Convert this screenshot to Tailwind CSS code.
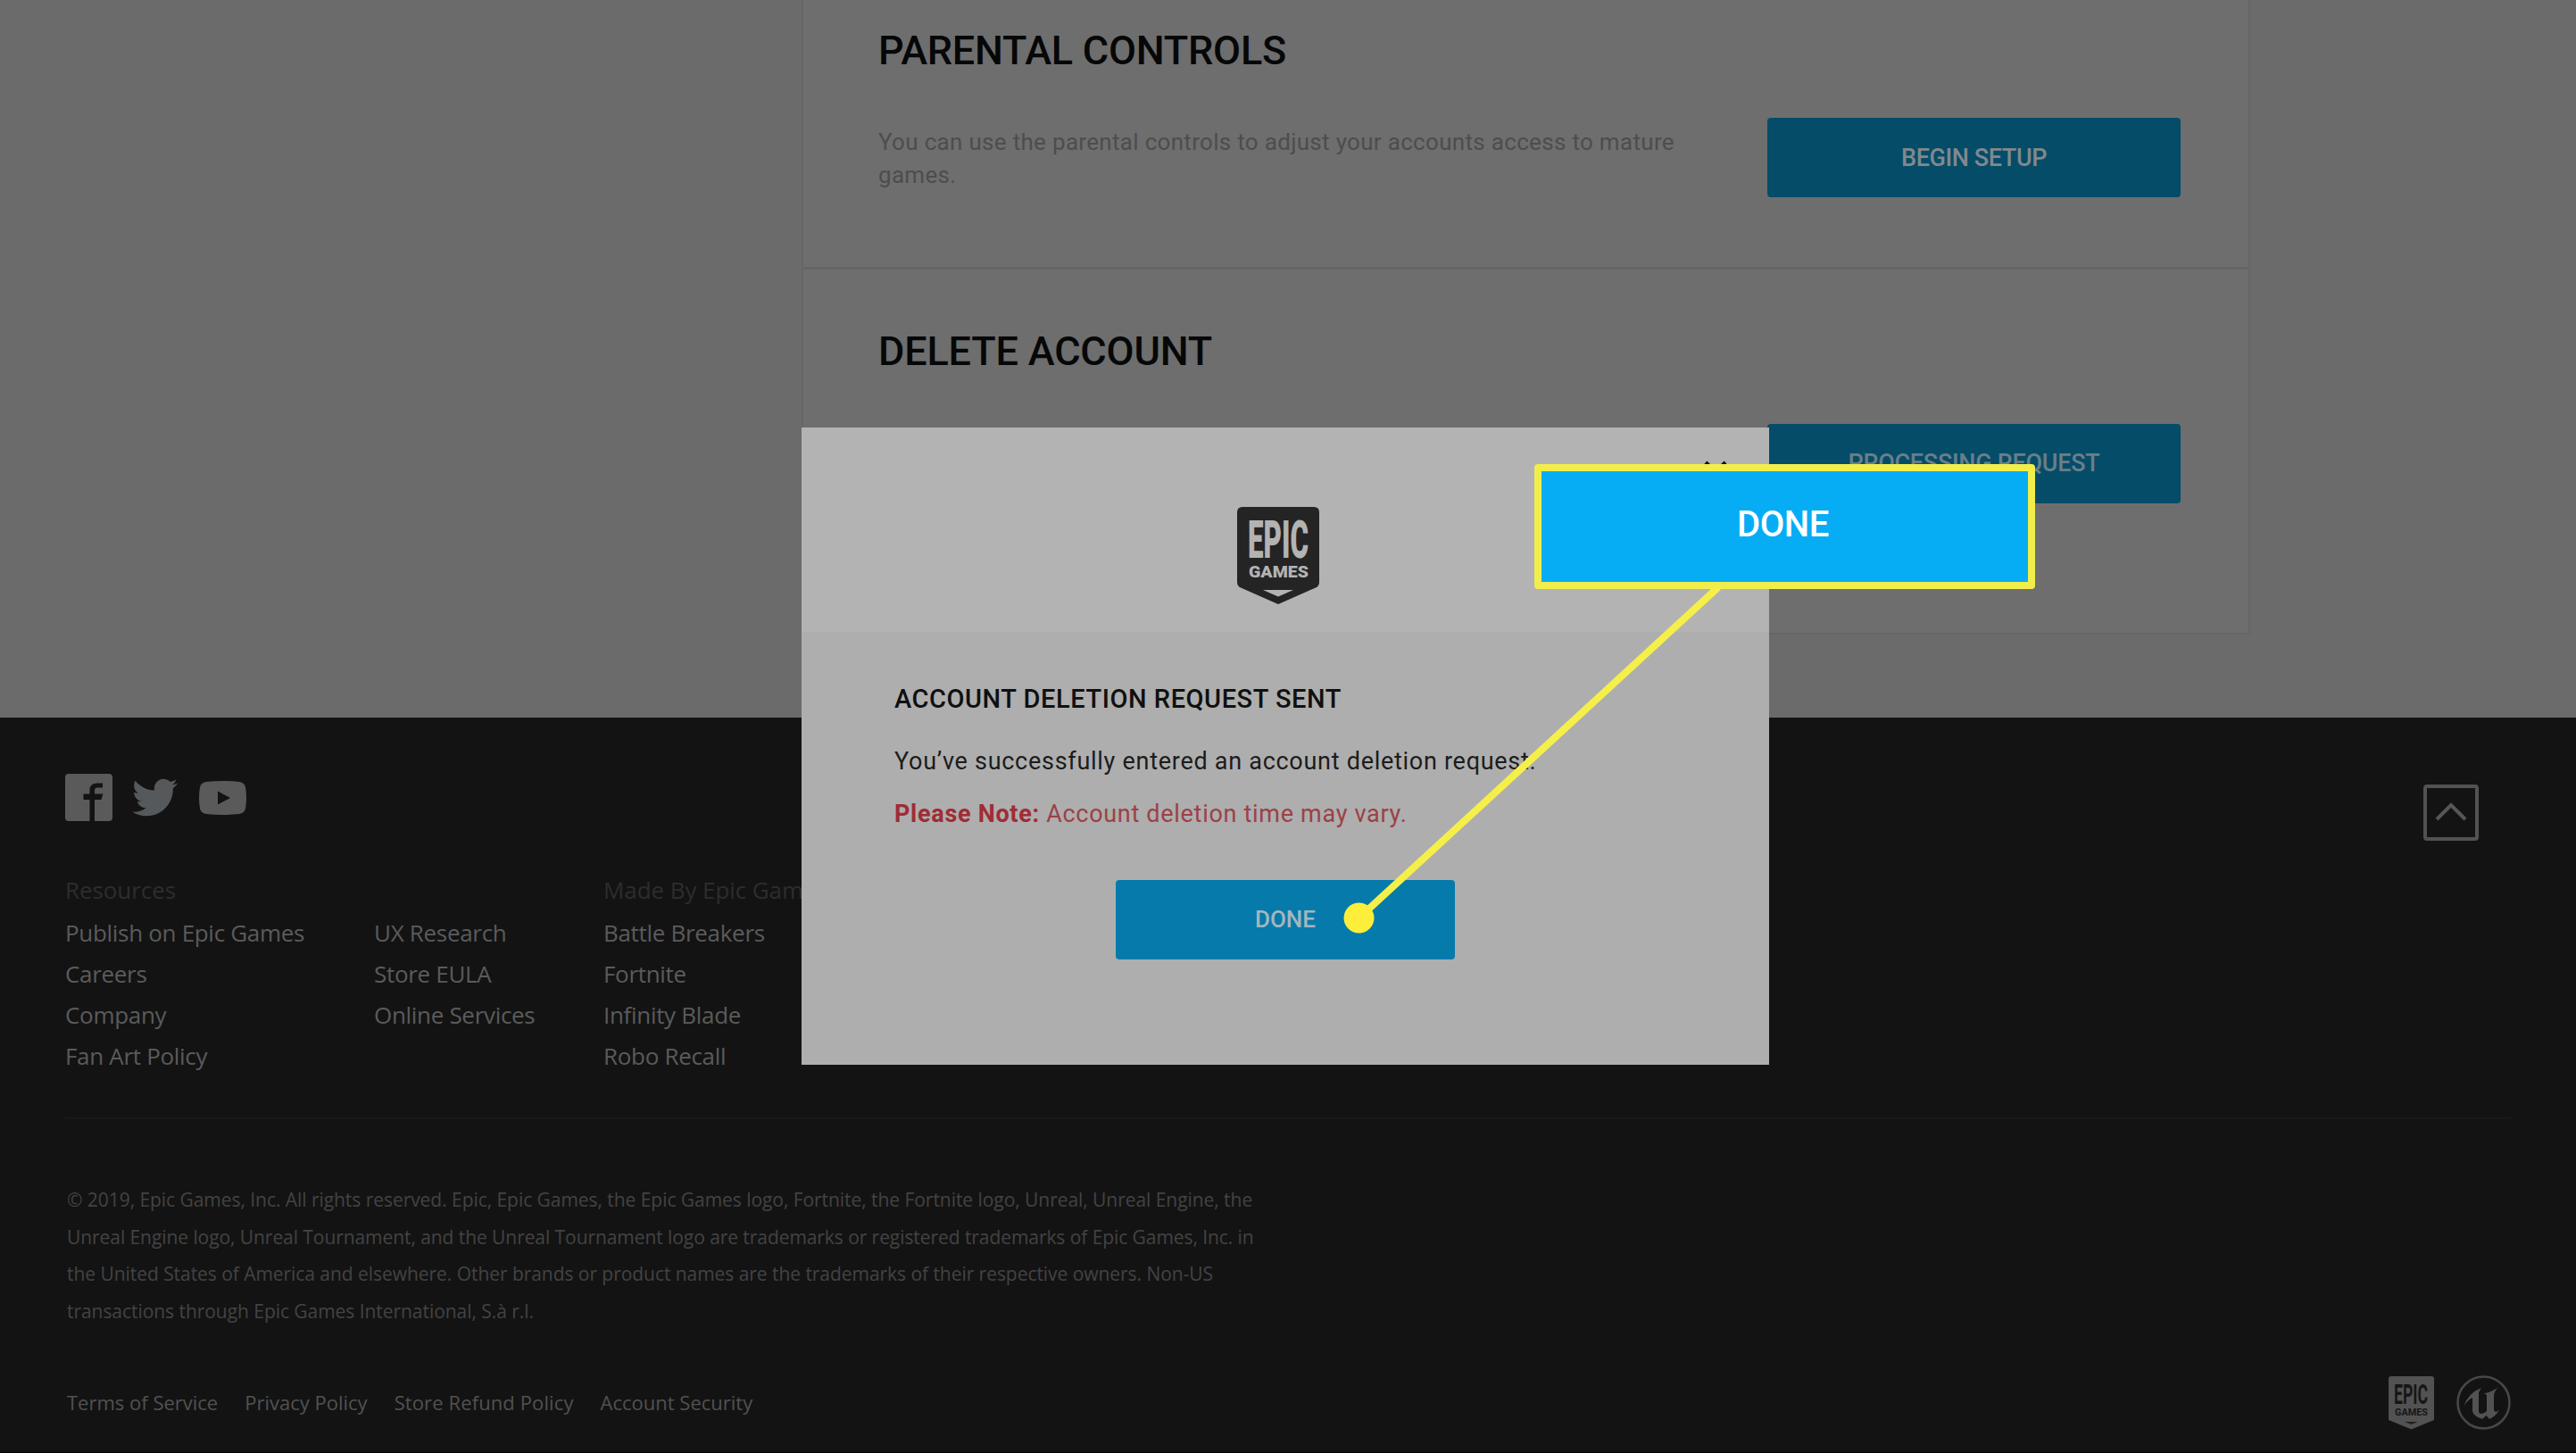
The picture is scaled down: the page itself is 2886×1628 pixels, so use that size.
<!DOCTYPE html>
<html lang="en">
<head>
    <meta charset="UTF-8">
    <meta name="viewport" content="width=device-width, initial-scale=1.0">
    <title>Epic Games - Account Settings</title>
    <script src="https://cdn.jsdelivr.net/npm/@tailwindcss/browser@4"></script>
</head>
<body class="relative w-[2886px] h-[1628px] overflow-hidden bg-[#131313] font-['Roboto',sans-serif]">
    <!-- Settings page -->
    <main class="h-[804px] bg-[#6b6b6b] pl-[898px]">
        <div class="w-[1623px] bg-[#6e6e6e] border-x-2 border-b-2 border-[#666666]">
            <section class="h-[302px] pl-[84px] pr-[76px] pt-[29px] border-b-3 border-[#656565]">
                <h2 class="text-[45px] leading-14 font-medium tracking-[-0.23px] text-[#060708]">PARENTAL CONTROLS</h2>
                <div class="mt-[47px] flex justify-between">
                    <p class="w-[900px] pt-[9px] text-[26px] leading-[37px] tracking-[0.31px] text-[#4d4d4d]">You can use the parental controls to adjust your accounts access to mature games.</p>
                    <button class="w-[463px] h-[89px] rounded bg-[#054c69] pt-0.5 text-[27px] font-medium tracking-[-0.4px] text-[#80898d]">BEGIN SETUP</button>
                </div>
            </section>
            <section class="h-[407px] pl-[84px] pr-[76px] pt-16">
                <h2 class="text-[45px] leading-14 font-medium tracking-[-0.17px] text-[#060708]">DELETE ACCOUNT</h2>
                <div class="mt-[53px] flex justify-end">
                    <button class="w-[463px] h-[89px] rounded bg-[#054c69] text-[27px] font-medium tracking-[-0.27px] text-[#687f89]">PROCESSING REQUEST</button>
                </div>
            </section>
        </div>
    </main>

    <!-- Footer -->
    <footer class="h-[824px] bg-[#131313] border-b border-black px-[73px] pt-[63px] font-['Open_Sans',sans-serif]">
        <div class="flex justify-between">
            <div class="flex h-[53px] items-center">
                <svg class="w-[53px] h-[53px]" viewBox="0 0 53 53" fill="#5a5a5a">
                    <path d="M4 0H49Q53 0 53 4V49Q53 53 49 53H33V29H40.500L42.500 22.500H33V18.500Q33 15.500 36.500 15.500H42V10.500H36Q27.500 10.500 27.500 18V22.500H20.500V29H27.500V53H4Q0 53 0 49V4Q0 0 4 0Z"/>
                </svg>
                <svg class="ml-[22px] w-[51px] h-[51px]" viewBox="0 0 24 24" fill="#56595b">
                    <path d="M23.950 4.570a10 10 0 0 1-2.820.780 4.960 4.960 0 0 0 2.160-2.730c-.950.560-2 .960-3.130 1.190a4.920 4.920 0 0 0-8.390 4.480C7.690 8.090 4.070 6.130 1.640 3.160a4.820 4.820 0 0 0-.670 2.480c0 1.710.870 3.210 2.190 4.100a4.900 4.900 0 0 1-2.230-.620v.060a4.920 4.920 0 0 0 3.950 4.830 5 5 0 0 1-2.210.080 4.940 4.940 0 0 0 4.600 3.420A9.870 9.870 0 0 1 0 19.540a13.990 13.990 0 0 0 7.560 2.210c9.050 0 14-7.500 14-13.980 0-.210 0-.420-.020-.630a9.940 9.940 0 0 0 2.460-2.550z"/>
                </svg>
                <svg class="ml-6 w-[53px] h-[38px]" viewBox="0 0 53 38">
                    <path fill="#5a5a5a" d="M8 1Q26.500-1 45 1Q51 2 52 7Q54 19 52 31Q51 36 45 37Q26.500 39 8 37Q2 36 1 31Q-1 19 1 7Q2 2 8 1Z"/>
                    <path fill="#131313" d="M21 11.500L35 19L21 26.500Z"/>
                </svg>
            </div>
            <button class="mt-3 mr-[36px] flex h-[63px] w-[62px] items-center justify-center rounded border-4 border-[#525252]">
                <svg class="mb-1 w-[36px] h-[22px]" viewBox="0 0 36 22" fill="none" stroke="#565656" stroke-width="4"><path d="M2 20L18 4L34 20"/></svg>
            </button>
        </div>

        <div class="mt-8 grid grid-cols-[346px_257px_1fr] text-[26px] leading-[46px] tracking-[-0.31px] text-[#5b5b5b]">
            <h3 class="col-span-2 h-12 tracking-[-0.08px] text-[#2d2d2d]">Resources</h3>
            <h3 class="h-12 tracking-[-0.08px] text-[#2d2d2d]">Made By Epic Games</h3>
            <ul>
                <li>Publish on Epic Games</li>
                <li>Careers</li>
                <li>Company</li>
                <li>Fan Art Policy</li>
            </ul>
            <ul>
                <li>UX Research</li>
                <li>Store EULA</li>
                <li>Online Services</li>
            </ul>
            <ul>
                <li>Battle Breakers</li>
                <li>Fortnite</li>
                <li>Infinity Blade</li>
                <li>Robo Recall</li>
            </ul>
        </div>

        <div class="mt-[46px] h-0.5 bg-[#181818]"></div>

        <div class="mt-[70px] h-[167px] whitespace-nowrap pl-0.5 text-[21px] leading-[41.7px] tracking-[-0.05px] text-[#434343]">
            <p>© 2019, Epic Games, Inc. All rights reserved. Epic, Epic Games, the Epic Games logo, Fortnite, the Fortnite logo, Unreal, Unreal Engine, the</p>
            <p class="tracking-[-0.07px]">Unreal Engine logo, Unreal Tournament, and the Unreal Tournament logo are trademarks or registered trademarks of Epic Games, Inc. in</p>
            <p>the United States of America and elsewhere. Other brands or product names are the trademarks of their respective owners. Non-US</p>
            <p>transactions through Epic Games International, S.à r.l.</p>
        </div>

        <div class="mt-[50px] flex h-[61px] items-center justify-between">
            <div class="flex gap-[30px] pl-0.5 text-[22px] text-[#515151]">
                <a>Terms of Service</a>
                <a>Privacy Policy</a>
                <a class="tracking-[0.11px]">Store Refund Policy</a>
                <a>Account Security</a>
            </div>
            <div class="flex gap-6">
                <svg class="w-[53px] h-[61px]" viewBox="0 0 53 61">
                    <path fill="#525252" d="M4 1H49Q52 1 52 4V50L26.500 60.500L1 50V4Q1 1 4 1Z"/>
                    <g fill="#161616" font-family="Roboto, sans-serif" font-weight="700">
                        <text x="7" y="32" font-size="32" textLength="38" lengthAdjust="spacingAndGlyphs">EPIC</text>
                        <text x="8" y="45" font-size="10" textLength="37" lengthAdjust="spacingAndGlyphs">GAMES</text>
                    </g>
                    <path fill="#202020" d="M19 52H34L26.500 55Z"/>
                </svg>
                <svg class="w-[61px] h-[61px]" viewBox="0 0 61 61">
                    <circle cx="30.500" cy="30.500" r="29" fill="none" stroke="#484848" stroke-width="2.500"/>
                    <path fill="#525252" d="M8 35Q13 20 28 14L25 19V40Q25 43 28 43Q31 43 34 40V22L31 20Q37 20 46 14Q42 19 42 23V38Q42 41 44.500 41L48 39Q44 46 37 49L33.500 45L29 49Q19 46 18 40V25Q12 28 8 35Z"/>
                </svg>
            </div>
        </div>
    </footer>

    <!-- Deletion request modal -->
    <div class="absolute left-[898px] top-[479px] w-[1084px] h-[714px] bg-[#aeaeae]">
        <div class="relative h-[229px] bg-[#b3b3b3] pt-[89px]">
            <svg class="absolute right-[46px] top-[36px] w-[28px] h-[28px]" viewBox="0 0 28 28" stroke="#111" stroke-width="4"><path d="M3 3L25 25M25 3L3 25"/></svg>
            <svg class="ml-[488px] w-[92px] h-[109px]" viewBox="0 0 92 109">
                <path fill="#242424" d="M6 0H86Q92 0 92 6V84Q92 88 89 90L46 109L3 90Q0 88 0 84V6Q0 0 6 0Z"/>
                <g fill="#b3b3b3" font-family="Roboto, sans-serif" font-weight="900">
                    <text x="12" y="57" font-size="60" textLength="68" lengthAdjust="spacingAndGlyphs">EPIC</text>
                    <text x="13" y="79" font-size="19" textLength="67" lengthAdjust="spacingAndGlyphs">GAMES</text>
                </g>
                <path fill="#b3b3b3" d="M29 93H63L46 100.500Z"/>
            </svg>
        </div>
        <div class="px-[104px] pt-[55px]">
            <h4 class="text-[29px] leading-10 font-medium tracking-[0.55px] text-[#101010]">ACCOUNT DELETION REQUEST SENT</h4>
            <p class="mt-[30px] text-[27px] leading-10 tracking-[0.72px] text-[#1c1c1c]">You’ve successfully entered an account deletion request.</p>
            <p class="mt-[19px] text-[27px] leading-10 tracking-[0.7px] text-[#9c4147]"><b class="text-[#a02c35]">Please Note:</b> Account deletion time may vary.</p>
        </div>
        <button class="mt-[54px] ml-[352px] block w-[380px] h-[89px] rounded bg-[#067bab] text-[26px] font-medium text-[#a3b6bf]">DONE</button>
    </div>

    <!-- Callout pointing at the modal button -->
    <svg class="absolute left-0 top-0 w-[2886px] h-[1628px]" viewBox="0 0 2886 1628">
        <path d="M1925 658L1522 1029" stroke="#f5ef4a" stroke-width="8"/>
        <circle cx="1522.500" cy="1028.500" r="17" fill="#fdee3a"/>
    </svg>
    <div class="absolute left-[1719px] top-[520px] flex w-[561px] h-[140px] items-center justify-center rounded-sm border-8 border-[#f1ee4c] bg-[#07adf4] pb-1 pr-1 text-[40px] font-medium tracking-[-0.4px] text-white">DONE</div>
</body>
</html>
